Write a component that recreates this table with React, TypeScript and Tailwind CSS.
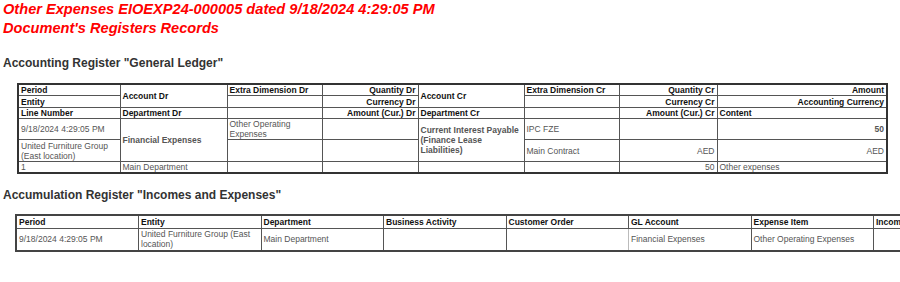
import React from "react";

const th = "border border-[#555] px-[2px] py-0 font-bold text-[#111] leading-[10px] whitespace-nowrap overflow-hidden";
const td = "border border-[#555] px-[2px] py-0 text-[#555] leading-[10px] align-middle";
const tdLight = "border border-[#555] border-l-[#bbb] px-[2px] py-0 text-[#555] leading-[10px] align-middle";

function LedgerTable() {
  return (
    <table className="ml-[14px] mt-[13px] w-[869px] table-fixed border-collapse border-2 border-[#333] text-[8.5px]">
      <colgroup>
        <col className="w-[102px]" />
        <col className="w-[107px]" />
        <col className="w-[95px]" />
        <col className="w-[96px]" />
        <col className="w-[106px]" />
        <col className="w-[95px]" />
        <col className="w-[98px]" />
        <col className="w-[170px]" />
      </colgroup>
      <thead>
        <tr className="h-[11px]">
          <th className={`${th} text-left`}>Period</th>
          <th className={`${th} text-left`} rowSpan={2}>Account Dr</th>
          <th className={`${th} text-left`}>Extra Dimension Dr</th>
          <th className={`${th} text-right`}>Quantity Dr</th>
          <th className={`${th} text-left`} rowSpan={2}>Account Cr</th>
          <th className={`${th} text-left`}>Extra Dimension Cr</th>
          <th className={`${th} text-right`}>Quantity Cr</th>
          <th className={`${th} text-right`}>Amount</th>
        </tr>
        <tr className="h-[12px]">
          <th className={`${th} text-left`}>Entity</th>
          <th className={th}></th>
          <th className={`${th} text-right`}>Currency Dr</th>
          <th className={th}></th>
          <th className={`${th} text-right`}>Currency Cr</th>
          <th className={`${th} text-right`}>Accounting Currency</th>
        </tr>
        <tr className="h-[11px]">
          <th className={`${th} text-left`}>Line Number</th>
          <th className={`${th} text-left`}>Department Dr</th>
          <th className={th}></th>
          <th className={`${th} text-right`}>Amount (Cur.) Dr</th>
          <th className={`${th} text-left`}>Department Cr</th>
          <th className={th}></th>
          <th className={`${th} text-right`}>Amount (Cur.) Cr</th>
          <th className={`${th} text-left`}>Content</th>
        </tr>
      </thead>
      <tbody>
        <tr className="h-[21px]">
          <td className={td}>9/18/2024 4:29:05 PM</td>
          <td className={`${td} font-bold text-[#222]`} rowSpan={2}>Financial Expenses</td>
          <td className={`${tdLight} align-top`}>Other Operating Expenses</td>
          <td className={td}></td>
          <td className={`${td} font-bold text-[#222]`} rowSpan={2}>Current Interest Payable (Finance Lease Liabilities)</td>
          <td className={tdLight}>IPC FZE</td>
          <td className={td}></td>
          <td className={`${td} text-right font-bold text-[#222]`}>50</td>
        </tr>
        <tr className="h-[22px]">
          <td className={td}>United Furniture Group (East location)</td>
          <td className={tdLight}></td>
          <td className={td}></td>
          <td className={tdLight}>Main Contract</td>
          <td className={`${td} text-right`}>AED</td>
          <td className={`${td} text-right`}>AED</td>
        </tr>
        <tr className="h-[11px]">
          <td className={td}>1</td>
          <td className={td}>Main Department</td>
          <td className={tdLight}></td>
          <td className={td}></td>
          <td className={td}></td>
          <td className={tdLight}></td>
          <td className={`${td} text-right`}>50</td>
          <td className={td}>Other expenses</td>
        </tr>
      </tbody>
    </table>
  );
}

const heads2 = [
  "Period",
  "Entity",
  "Department",
  "Business Activity",
  "Customer Order",
  "GL Account",
  "Expense Item",
  "Income Item",
  "Amount",
];

const row2 = [
  "9/18/2024 4:29:05 PM",
  "United Furniture Group (East location)",
  "Main Department",
  "",
  "",
  "Financial Expenses",
  "Other Operating Expenses",
  "",
  "50",
];

function IncomesTable() {
  return (
    <table className="ml-[12px] mt-[12px] w-[1103px] table-fixed border-collapse border-2 border-[#444] text-[8.5px]">
      <colgroup>
        {heads2.map((h) => (
          <col key={h} className="w-[122.5px]" />
        ))}
      </colgroup>
      <thead>
        <tr className="h-[13px]">
          {heads2.map((h) => (
            <th key={h} className={`${th} text-left`}>
              {h}
            </th>
          ))}
        </tr>
      </thead>
      <tbody>
        <tr className="h-[22px]">
          {row2.map((v, i) => (
            <td key={i} className={`${td} align-bottom pb-[1px] ${i === 4 ? "border-r-[#bbb]" : ""}`}>
              {v}
            </td>
          ))}
        </tr>
      </tbody>
    </table>
  );
}

export default function App() {
  return (
    <div className="w-[900px] h-[282px] overflow-hidden bg-white pl-[3px] font-['Liberation_Sans',Arial,sans-serif]">
      <div className="text-[14.6px] leading-[19px] font-bold italic text-[#ff0000]">
        <div>Other Expenses EIOEXP24-000005 dated 9/18/2024 4:29:05 PM</div>
        <div>Document's Registers Records</div>
      </div>
      <h2 className="mt-[18px] text-[12px] leading-[14px] font-bold text-[#333]">
        Accounting Register "General Ledger"
      </h2>
      <LedgerTable />
      <h2 className="mt-[14px] text-[12px] leading-[14px] font-bold text-[#333]">
        Accumulation Register "Incomes and Expenses"
      </h2>
      <IncomesTable />
    </div>
  );
}
